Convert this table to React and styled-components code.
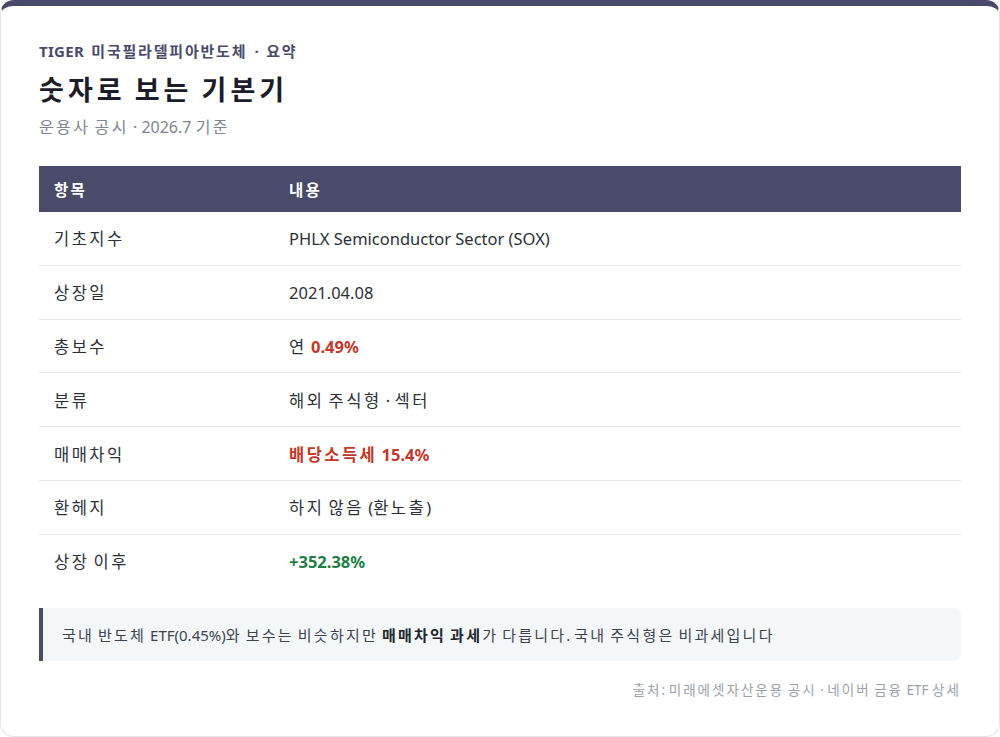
import React from "react";
import styled, { createGlobalStyle } from "styled-components";

const GlobalStyle = createGlobalStyle`
  html, body {
    margin: 0;
    padding: 0;
    background: #ffffff;
  }
  body {
    font-family: "Noto Sans", "Noto Sans CJK KR", sans-serif;
  }
`;

// Hangul in the reference font runs wider than Noto CJK, so widen those runs a bit
const Hangul = styled.span`
  letter-spacing: ${(p) => p.spread || "0.15em"};
`;

const K = ({ children, spread }) => {
  if (typeof children !== "string") return children;
  return children
    .split(/([\uAC00-\uD7A3\u3131-\u318E]+)/)
    .map((part, i) =>
      /[\uAC00-\uD7A3\u3131-\u318E]/.test(part) ? (
        <Hangul key={i} spread={spread}>
          {part}
        </Hangul>
      ) : (
        part
      )
    );
};

const Card = styled.div`
  box-sizing: border-box;
  width: 1000px;
  height: 737px;
  background: #ffffff;
  border: 1px solid #e3e6ec;
  border-top: 6px solid #4a4a6a;
  border-radius: 14px;
  padding: 35px 38px 0;
  display: flex;
  flex-direction: column;
`;

const Eyebrow = styled.div`
  font-size: 15px;
  font-weight: 700;
  color: #4a4a6a;
  line-height: 20px;
  letter-spacing: 0.3px;
  word-spacing: 3px;
`;

const Title = styled.h1`
  margin: 10px 0 0;
  font-size: 27px;
  font-weight: 700;
  color: #1c1c2b;
  line-height: 38px;
  word-spacing: 2px;
`;

const Subtitle = styled.div`
  margin-top: 7px;
  font-size: 16px;
  color: #7d8592;
  line-height: 22px;
`;

const Table = styled.table`
  margin-top: 28px;
  width: 100%;
  border-collapse: collapse;
  font-size: 16.5px;
`;

const HeadCell = styled.th`
  background: #4a4a6a;
  color: #ffffff;
  font-weight: 700;
  font-size: 15.5px;
  text-align: left;
  height: 46px;
  padding: 0 15px;
  width: ${(p) => p.width || "auto"};
`;

const Row = styled.tr`
  border-bottom: ${(p) => (p.last ? "none" : "1px solid #e8eaee")};
`;

const Cell = styled.td`
  height: 52.8px;
  padding: 0 15px;
  color: #2b2f38;
`;

const Value = styled.span`
  font-weight: 700;
  color: ${(p) => (p.tone === "green" ? "#1e7e45" : "#c0392b")};
`;

const Note = styled.div`
  margin-top: 20px;
  background: #f4f7fa;
  border-left: 4px solid #4a4a6a;
  border-radius: 0 8px 8px 0;
  padding: 0 19px;
  height: 53px;
  display: flex;
  align-items: center;
  font-size: 15px;
  color: #3d434d;

  b {
    font-weight: 700;
    color: #22252c;
  }
`;

const Source = styled.div`
  margin-top: 18px;
  text-align: right;
  font-size: 13.5px;
  color: #9aa1ab;
`;

const rows = [
  ["기초지수", <K>PHLX Semiconductor Sector (SOX)</K>],
  ["상장일", <K>2021.04.08</K>],
  ["총보수", <><K>연 </K><Value>0.49%</Value></>],
  ["분류", <K>해외 주식형 · 섹터</K>],
  ["매매차익", <Value><K>배당소득세 15.4%</K></Value>],
  ["환헤지", <K>하지 않음 (환노출)</K>],
  ["상장 이후", <Value tone="green">+352.38%</Value>],
];

export default function App() {
  return (
    <>
      <GlobalStyle />
      <Card>
        <Eyebrow>
          <K spread="0.12em">TIGER 미국필라델피아반도체 · 요약</K>
        </Eyebrow>
        <Title>
          <K>숫자로 보는 기본기</K>
        </Title>
        <Subtitle>
          <K>운용사 공시 · 2026.7 기준</K>
        </Subtitle>
        <Table>
          <thead>
            <tr>
              <HeadCell width="205px">
                <K>항목</K>
              </HeadCell>
              <HeadCell>
                <K>내용</K>
              </HeadCell>
            </tr>
          </thead>
          <tbody>
            {rows.map(([label, value], i) => (
              <Row key={label} last={i === rows.length - 1}>
                <Cell>
                  <K>{label}</K>
                </Cell>
                <Cell>{value}</Cell>
              </Row>
            ))}
          </tbody>
        </Table>
        <Note>
          <span>
            <K>국내 반도체 ETF(0.45%)와 보수는 비슷하지만 </K>
            <b>
              <K>매매차익 과세</K>
            </b>
            <K>가 다릅니다. 국내 주식형은 비과세입니다</K>
          </span>
        </Note>
        <Source>
          <K>출처: 미래에셋자산운용 공시 · 네이버 금융 ETF 상세</K>
        </Source>
      </Card>
    </>
  );
}
